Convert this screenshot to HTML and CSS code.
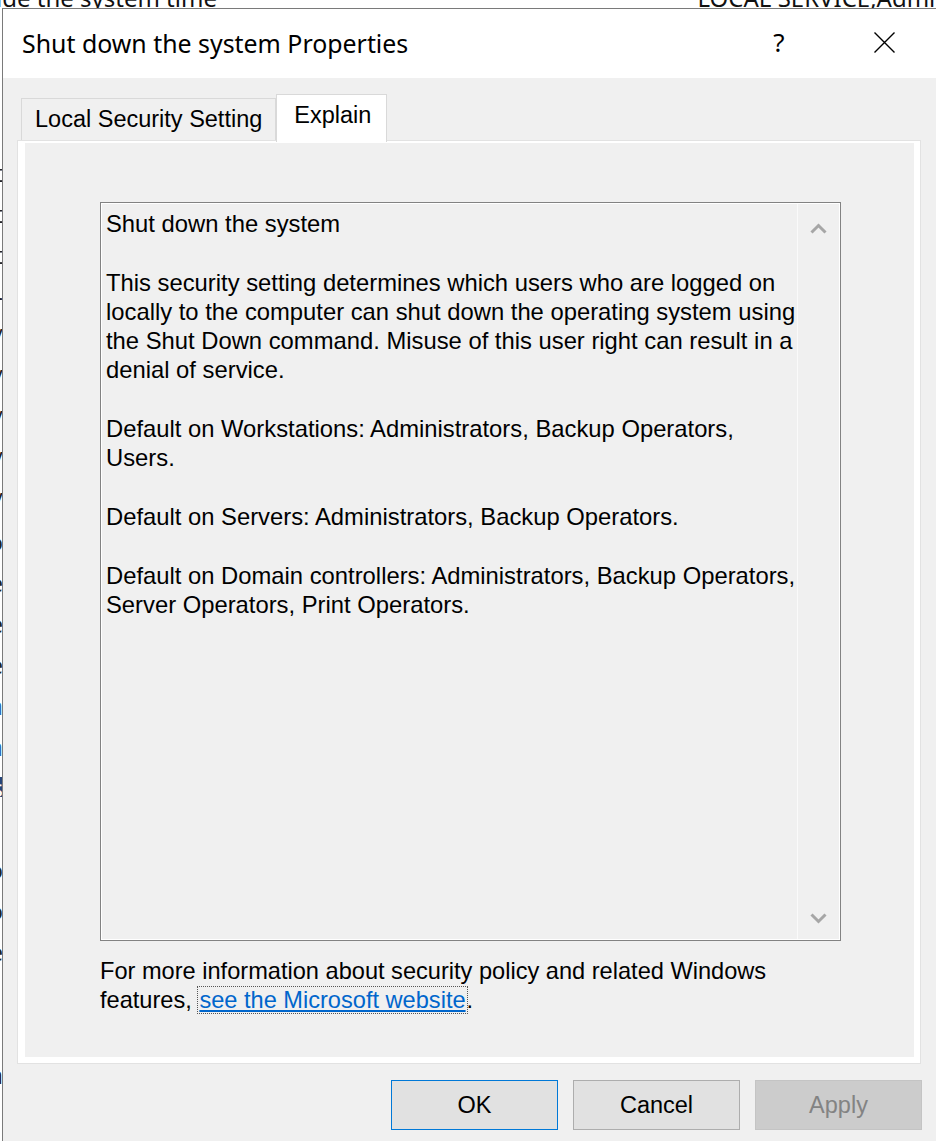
FILE: index.html
```html
<!DOCTYPE html>
<html lang="en">
<head>
<meta charset="utf-8">
<title>Shut down the system Properties</title>
<link rel="stylesheet" href="styles.css">
</head>
<body>
<div class="desktop">
  <div class="bgwin">
    <div class="bg-top">
      <span class="bg-name">ide the system time</span>
      <span class="bg-val">LOCAL SERVICE,Administrators</span>
    </div>
    <ul class="bg-list">
      <li>t</li><li>t</li><li>t</li><li>-</li><li>/</li><li>/</li><li>/</li><li>/</li><li>/</li><li>o</li><li>e</li><li>e</li><li>e</li>
      <li class="blue">a</li><li class="blue">a</li><li class="sel">s</li><li></li><li>o</li><li>o</li><li>e</li><li></li><li></li><li>a</li>
    </ul>
  </div>

  <div class="dialog">
    <div class="titlebar">
      <div class="title">Shut down the system Properties</div>
      <div class="tb-btn help">?</div>
      <div class="tb-btn close">
        <svg width="21" height="21" viewBox="0 0 21 21"><path d="M0.5 0.5 L20.5 20.5 M20.5 0.5 L0.5 20.5" stroke="#000" stroke-width="1.4" fill="none"/></svg>
      </div>
    </div>

    <div class="dlg-body">
      <div class="tabs">
        <div class="tab">Local Security Setting</div>
        <div class="tab active">Explain</div>
      </div>

      <div class="panel">
        <div class="page">
          <div class="textbox">
            <div class="tb-text">
              <p>Shut down the system</p>
              <p>This security setting determines which users who are logged on<br>locally to the computer can shut down the operating system using<br>the Shut Down command. Misuse of this user right can result in a<br>denial of service.</p>
              <p>Default on Workstations: Administrators, Backup Operators,<br>Users.</p>
              <p>Default on Servers: Administrators, Backup Operators.</p>
              <p>Default on Domain controllers: Administrators, Backup Operators,<br>Server Operators, Print Operators.</p>
            </div>
            <div class="scrollbar">
              <div class="sb-btn up">
                <svg width="17" height="11" viewBox="0 0 17 11"><path d="M1.5 9.5 L8.5 2.5 L15.5 9.5" stroke="#a6a6a6" stroke-width="3" fill="none"/></svg>
              </div>
              <div class="sb-btn down">
                <svg width="17" height="11" viewBox="0 0 17 11"><path d="M1.5 1.5 L8.5 8.5 L15.5 1.5" stroke="#a6a6a6" stroke-width="3" fill="none"/></svg>
              </div>
            </div>
          </div>
          <p class="more">For more information about security policy and related Windows<br>features, <a class="link" href="#">see the Microsoft website</a>.</p>
        </div>
      </div>

      <div class="buttons">
        <button class="btn ok">OK</button>
        <button class="btn">Cancel</button>
        <button class="btn apply">Apply</button>
      </div>
    </div>
  </div>
</div>
</body>
</html>
```

FILE: styles.css
```css
* { box-sizing: border-box; }

html, body {
  margin: 0;
  padding: 0;
  overflow: hidden;
  background: #fff;
}

body {
  font-family: "Liberation Sans", Arial, sans-serif;
  color: #000;
}

.desktop {
  position: relative;
  width: 936px;
  height: 1141px;
  overflow: hidden;
}

/* background window */
.bgwin {
  position: absolute;
  inset: 0;
  background: #fff;
}

.bg-top {
  display: flex;
  margin-top: -18px;
  height: 32px;
  font-family: "Noto Sans", sans-serif;
  font-size: 24px;
  line-height: 32px;
  color: #111;
}

.bg-name { margin-left: -4px; }
.bg-val { margin-left: auto; margin-right: -108px; }

.bg-list {
  list-style: none;
  margin: 138px 0 0;
  padding: 0;
  width: 3px;
  font-family: "Noto Sans", sans-serif;
  font-size: 24px;
  color: #222;
}

.bg-list li {
  height: 41px;
  display: flex;
  justify-content: flex-end;
  align-items: center;
}

.bg-list li.blue { color: #2a6db5; }
.bg-list li.sel { background: #26457a; height: 20px; margin: 10px 0 11px; color: #fff; }

/* dialog */
.dialog {
  position: absolute;
  left: 2px;
  top: 8px;
  width: 962px;
  height: 1160px;
  border: 1px solid #7a7a7a;
  background: #f0f0f0;
}

.titlebar {
  height: 69px;
  background: #fff;
  display: flex;
  align-items: center;
  padding: 0 51px 0 19px;
}

.title {
  flex: 1;
  font-family: "Noto Sans", sans-serif;
  font-size: 24.9px;
  line-height: 32px;
  margin-top: -1px;
  color: #000;
}

.tb-btn {
  display: flex;
  align-items: center;
  justify-content: center;
}

.help {
  width: 40px;
  margin-right: 57px;
  font-family: "Noto Sans", sans-serif;
  font-size: 26px;
  line-height: 32px;
  margin-top: -4px;
  color: #000;
}

.close {
  width: 56px;
  margin-top: -3px;
}

.dlg-body {
  padding: 16px 0 0 14px;
}

.tabs {
  display: flex;
  align-items: flex-end;
  margin-left: 4px;
}

.tab {
  height: 42px;
  border: 1px solid #d9d9d9;
  border-bottom: 0;
  padding: 0 13px;
  font-size: 23.5px;
  line-height: 40px;
  background: #f0f0f0;
  white-space: nowrap;
}

.tab.active {
  height: 48px;
  margin-bottom: -2px;
  padding: 0 15px 0 17px;
  background: #fff;
  position: relative;
  z-index: 1;
}

.panel {
  width: 904px;
  height: 924px;
  background: #fff;
  border: 1px solid #e2e2e2;
  padding: 2px 6px 6px 7px;
}

.page {
  height: 100%;
  background: #f0f0f0;
  padding: 59px 0 0 75px;
}

.textbox {
  width: 741px;
  height: 739px;
  border: 1px solid #828282;
  box-shadow: inset 0 0 0 1px #fff;
  display: flex;
}

.tb-text {
  flex: 1;
  padding: 6px 0 0 5px;
  font-size: 23.8px;
  line-height: 29.3px;
  white-space: nowrap;
  overflow: hidden;
}

.tb-text p {
  margin: 0 0 29.3px;
}

.scrollbar {
  width: 41px;
  margin: 1px 2px 1px 0;
  border-left: 1px solid #fafafa;
  background: #f0f0f0;
  display: flex;
  flex-direction: column;
  justify-content: space-between;
}

.sb-btn {
  display: flex;
  align-items: center;
  justify-content: center;
}

.sb-btn.up { height: 48px; }
.sb-btn.down { height: 42px; }

.more {
  margin: 16px 0 0;
  font-size: 23.6px;
  line-height: 29.3px;
  white-space: nowrap;
}

.link {
  color: #0066cc;
  text-decoration: underline;
  outline: 1px dotted #555;
  padding: 0 1px;
}

.buttons {
  display: flex;
  gap: 15px;
  padding-left: 374px;
  margin-top: 16px;
}

.btn {
  width: 167px;
  height: 50px;
  background: #e1e1e1;
  border: 1px solid #adadad;
  font-family: "Liberation Sans", Arial, sans-serif;
  font-size: 23.5px;
  color: #000;
  padding: 0;
}

.btn.ok {
  border-color: #0078d7;
}

.btn.apply {
  background: #cccccc;
  border-color: #c4c4c4;
  color: #838383;
}
```
